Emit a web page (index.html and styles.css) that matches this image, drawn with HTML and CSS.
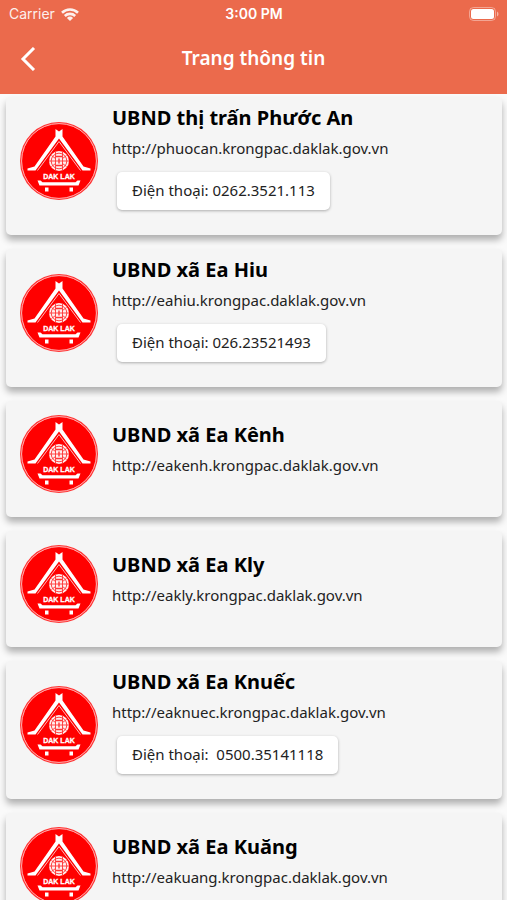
FILE: index.html
```
<!DOCTYPE html>
<html lang="vi">
<head>
<meta charset="utf-8">
<meta name="viewport" content="width=device-width, initial-scale=1">
<title>Trang thông tin</title>
<link rel="stylesheet" href="styles.css">
</head>
<body>
<svg class="defs" aria-hidden="true">
  <symbol id="emblem" viewBox="0 0 78 78">
    <circle cx="39" cy="39" r="39" fill="#f33"/>
    <circle cx="39" cy="39" r="37.400" fill="#f00" stroke="#fdd" stroke-width="0.800"/>
    <path d="M35.500 7 39 9.500 42.500 7V14.500L63.500 44.500 70.500 46.500V48.500H62.500L39 16.500 15.500 48.500H7.500V46.500L14.500 44.500 35.500 14.500z" fill="#fff"/>
    <path d="M39 19.500 17.500 48.500M39 19.500 60.500 48.500" fill="none" stroke="#fbb" stroke-width="1"/>
    <circle cx="39" cy="39" r="10" fill="#fee"/>
    <g fill="none" stroke="#f33" stroke-width="0.900">
      <circle cx="39" cy="39" r="7.800"/>
      <path d="M35.500 29.500V48.500M42.500 29.500V48.500M29 39H49M31.500 33.500 35.500 36.500M46.500 33.500 42.500 36.500M31.500 44.500 35.500 41.500M46.500 44.500 42.500 41.500"/>
      <path d="M36 34.500h6M36 43.500h6M39 36.500v5" stroke-width="1.400"/>
    </g>
    <text x="39" y="57" class="emblem-text">DAK LAK</text>
    <path d="M17.500 58.500h3l2 1.800h33l2-1.800h3l-2 5H19.500zM25 65.500h3.500v4H25zM49.500 65.500H53v4h-3.500z" fill="#fff"/>
  </symbol>
</svg>
<header class="header">
  <div class="status">
    <div class="carrier">Carrier
      <svg class="wifi" viewBox="0 0 18 13" aria-hidden="true"><g fill="none" stroke="#fff" stroke-width="2.600"><path d="M1 4.800a11.500 11.500 0 0 1 16 0M3.800 8a7.500 7.500 0 0 1 10.400 0"/></g><path d="M9 13 5.900 9.900a4.400 4.400 0 0 1 6.200 0z" fill="#fff"/></svg>
    </div>
    <div class="time">3:00 PM</div>
    <svg class="battery" viewBox="0 0 30 14" aria-hidden="true"><rect x="0.500" y="0.500" width="26" height="13" rx="4" fill="none" stroke="#fff" stroke-opacity="0.400"/><rect x="2" y="2" width="23" height="10" rx="2.500" fill="#fff"/><path d="M28 4.500a2.800 2.800 0 0 1 0 5z" fill="#fff" fill-opacity="0.500"/></svg>
  </div>
  <div class="nav">
    <button class="back" type="button" aria-label="Quay lại"><svg viewBox="0 0 16 24" aria-hidden="true"><path d="M14 1 3 12l11 11" fill="none" stroke="#fff" stroke-width="3"/></svg></button>
    <h1 class="title">Trang thông tin</h1>
  </div>
</header>
<main class="list">
  <article class="card"><svg class="logo" aria-hidden="true"><use href="#emblem"/></svg><div class="info"><h2>UBND thị trấn Phước An</h2><a href="http://phuocan.krongpac.daklak.gov.vn">http://phuocan.krongpac.daklak.gov.vn</a><button class="phone" type="button">Điện thoại: 0262.3521.113</button></div></article>
  <article class="card"><svg class="logo" aria-hidden="true"><use href="#emblem"/></svg><div class="info"><h2>UBND xã Ea Hiu</h2><a href="http://eahiu.krongpac.daklak.gov.vn">http://eahiu.krongpac.daklak.gov.vn</a><button class="phone" type="button">Điện thoại: 026.23521493</button></div></article>
  <article class="card"><svg class="logo" aria-hidden="true"><use href="#emblem"/></svg><div class="info"><h2>UBND xã Ea Kênh</h2><a href="http://eakenh.krongpac.daklak.gov.vn">http://eakenh.krongpac.daklak.gov.vn</a></div></article>
  <article class="card"><svg class="logo" aria-hidden="true"><use href="#emblem"/></svg><div class="info"><h2>UBND xã Ea Kly</h2><a href="http://eakly.krongpac.daklak.gov.vn">http://eakly.krongpac.daklak.gov.vn</a></div></article>
  <article class="card"><svg class="logo" aria-hidden="true"><use href="#emblem"/></svg><div class="info"><h2>UBND xã Ea Knuếc</h2><a href="http://eaknuec.krongpac.daklak.gov.vn">http://eaknuec.krongpac.daklak.gov.vn</a><button class="phone" type="button">Điện thoại:&nbsp; 0500.35141118</button></div></article>
  <article class="card"><svg class="logo" aria-hidden="true"><use href="#emblem"/></svg><div class="info"><h2>UBND xã Ea Kuăng</h2><a href="http://eakuang.krongpac.daklak.gov.vn">http://eakuang.krongpac.daklak.gov.vn</a></div></article>
</main>
</body>
</html>
```
FILE: styles.css
```
* { box-sizing: border-box; }
body {
  margin: 0;
  height: 100vh;
  display: flex;
  flex-direction: column;
  overflow: hidden;
  background: #fafafa;
  color: #000;
  font-family: "Noto Sans", "Open Sans", sans-serif;
}
.defs { position: absolute; width: 0; height: 0; visibility: hidden; }
.header { flex: none; background: #eb6a4c; color: #fff; }
.status {
  display: grid;
  grid-template-columns: 1fr auto 1fr;
  align-items: center;
  height: 28px;
  padding: 0 8px 0 9px;
  font: 14px/20px Inter, sans-serif;
}
.carrier { display: flex; align-items: center; gap: 6px; opacity: 0.9; }
.wifi { width: 18px; height: 13px; }
.time { font-weight: 600; }
.battery { width: 30px; height: 14px; justify-self: end; }
.nav {
  display: grid;
  grid-template-columns: 56px 1fr 56px;
  align-items: center;
  height: 66px;
  padding-bottom: 4px;
}
.back {
  display: flex;
  justify-content: center;
  padding: 0;
  border: 0;
  background: none;
}
.back svg { width: 16px; height: 24px; }
.title {
  margin: 0;
  padding-bottom: 2px;
  text-align: center;
  font-size: 19px;
  line-height: 28px;
  font-weight: 600;
}
.list {
  flex: 1;
  min-height: 0;
  overflow: hidden;
  display: flex;
  flex-direction: column;
  gap: 14px;
  padding: 3px 5px 0 6px;
}
.card {
  flex: none;
  display: flex;
  align-items: center;
  gap: 14px;
  min-height: 116px;
  padding: 6px 14px 16px;
  border-radius: 5px;
  background: #f5f5f5;
  box-shadow: 0 5px 7px rgba(0, 0, 0, 0.3);
}
.logo { flex: none; width: 78px; height: 78px; }
.emblem-text {
  fill: #fff;
  stroke: #fff;
  stroke-width: 0.3px;
  font: bold 7px "Liberation Sans", sans-serif;
  text-anchor: middle;
}
.info {
  display: flex;
  flex-direction: column;
  align-items: flex-start;
  padding-bottom: 8px;
}
.info h2 { margin: 0; font-size: 20px; line-height: 30px; font-weight: 700; }
.info a {
  color: #222;
  font-size: 15px;
  line-height: 30px;
  text-decoration: none;
}
.phone {
  height: 38px;
  margin: 9px 5px 1px;
  padding: 0 15px 2px;
  border: 0;
  border-radius: 5px;
  background: #fff;
  color: #222;
  font: 15px/24px "Noto Sans", "Open Sans", sans-serif;
  box-shadow: 0 1px 3px rgba(0, 0, 0, 0.3);
}
```
